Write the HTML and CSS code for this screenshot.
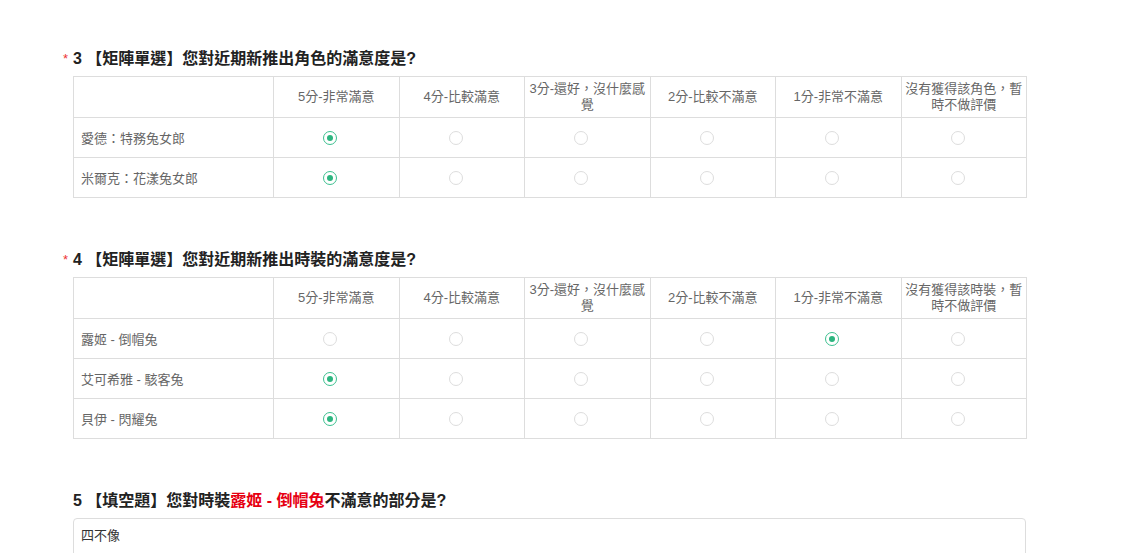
FILE: index.html
```html
<!DOCTYPE html>
<html lang="zh-Hant">
<head>
    <meta charset="UTF-8">
    <meta name="viewport" content="width=device-width, initial-scale=1.0">
    <title>問卷</title>
    <link rel="stylesheet" href="styles.css">
</head>
<body>
    <div class="survey">
        <div class="question">
            <div class="q-title"><span class="required">*</span>3 【矩陣單選】您對近期新推出角色的滿意度是?</div>
            <table class="matrix">
                <tr>
                    <th class="label-col"></th>
                    <th>5分-非常滿意</th>
                    <th>4分-比較滿意</th>
                    <th>3分-還好，沒什麼感覺</th>
                    <th>2分-比較不滿意</th>
                    <th>1分-非常不滿意</th>
                    <th>沒有獲得該角色，暫時不做評價</th>
                </tr>
                <tr>
                    <td class="label-col">愛德：特務兔女郎</td>
                    <td><span class="radio checked"></span></td>
                    <td><span class="radio"></span></td>
                    <td><span class="radio"></span></td>
                    <td><span class="radio"></span></td>
                    <td><span class="radio"></span></td>
                    <td><span class="radio"></span></td>
                </tr>
                <tr>
                    <td class="label-col">米爾克：花漾兔女郎</td>
                    <td><span class="radio checked"></span></td>
                    <td><span class="radio"></span></td>
                    <td><span class="radio"></span></td>
                    <td><span class="radio"></span></td>
                    <td><span class="radio"></span></td>
                    <td><span class="radio"></span></td>
                </tr>
            </table>
        </div>

        <div class="question">
            <div class="q-title"><span class="required">*</span>4 【矩陣單選】您對近期新推出時裝的滿意度是?</div>
            <table class="matrix">
                <tr>
                    <th class="label-col"></th>
                    <th>5分-非常滿意</th>
                    <th>4分-比較滿意</th>
                    <th>3分-還好，沒什麼感覺</th>
                    <th>2分-比較不滿意</th>
                    <th>1分-非常不滿意</th>
                    <th>沒有獲得該時裝，暫時不做評價</th>
                </tr>
                <tr>
                    <td class="label-col">露姬 - 倒帽兔</td>
                    <td><span class="radio"></span></td>
                    <td><span class="radio"></span></td>
                    <td><span class="radio"></span></td>
                    <td><span class="radio"></span></td>
                    <td><span class="radio checked"></span></td>
                    <td><span class="radio"></span></td>
                </tr>
                <tr>
                    <td class="label-col">艾可希雅 - 駭客兔</td>
                    <td><span class="radio checked"></span></td>
                    <td><span class="radio"></span></td>
                    <td><span class="radio"></span></td>
                    <td><span class="radio"></span></td>
                    <td><span class="radio"></span></td>
                    <td><span class="radio"></span></td>
                </tr>
                <tr>
                    <td class="label-col">貝伊 - 閃耀兔</td>
                    <td><span class="radio checked"></span></td>
                    <td><span class="radio"></span></td>
                    <td><span class="radio"></span></td>
                    <td><span class="radio"></span></td>
                    <td><span class="radio"></span></td>
                    <td><span class="radio"></span></td>
                </tr>
            </table>
        </div>

        <div class="question">
            <div class="q-title">5 【填空題】您對時裝<span class="highlight">露姬 - 倒帽兔</span>不滿意的部分是?</div>
            <div class="text-answer">四不像</div>
        </div>
    </div>
</body>
</html>
```

FILE: styles.css
```css
body {
    margin: 0;
    background-color: #fff;
    font-family: "Liberation Sans", "Noto Sans CJK TC", sans-serif;
    color: #333;
}
.survey {
    width: 953px;
    margin-left: 73px;
    padding-top: 48px;
}
.question {
    margin-bottom: 51px;
}
.q-title {
    position: relative;
    font-size: 16px;
    font-weight: bold;
    line-height: 22px;
    color: #222;
    margin-bottom: 6px;
}
.required {
    position: absolute;
    left: -10px;
    top: 0;
    color: #e33;
    font-weight: normal;
    font-size: 13px;
}
.highlight {
    color: #e60012;
}
.matrix {
    width: 954px;
    border-collapse: collapse;
    table-layout: fixed;
    font-size: 13px;
    color: #666;
}
.matrix th,
.matrix td {
    border: 1px solid #ddd;
    text-align: center;
    padding: 0 2px;
    height: 39px;
}
.matrix th {
    font-weight: normal;
    height: 40px;
    line-height: 16px;
}
.matrix .label-col {
    width: 200px;
    box-sizing: border-box;
    text-align: left;
    padding-left: 7px;
}
.radio {
    display: inline-block;
    width: 12px;
    height: 12px;
    margin-right: 12px;
    border: 1px solid #ddd;
    border-radius: 50%;
    vertical-align: middle;
    position: relative;
}
.radio.checked {
    border-color: #3cc08f;
}
.radio.checked::after {
    content: "";
    position: absolute;
    left: 3px;
    top: 3px;
    width: 6px;
    height: 6px;
    border-radius: 50%;
    background-color: #2cb57f;
}
.text-answer {
    border: 1px solid #ddd;
    border-radius: 4px;
    padding: 7px 7px;
    min-height: 60px;
    font-size: 13px;
    line-height: 20px;
    color: #333;
}
```
